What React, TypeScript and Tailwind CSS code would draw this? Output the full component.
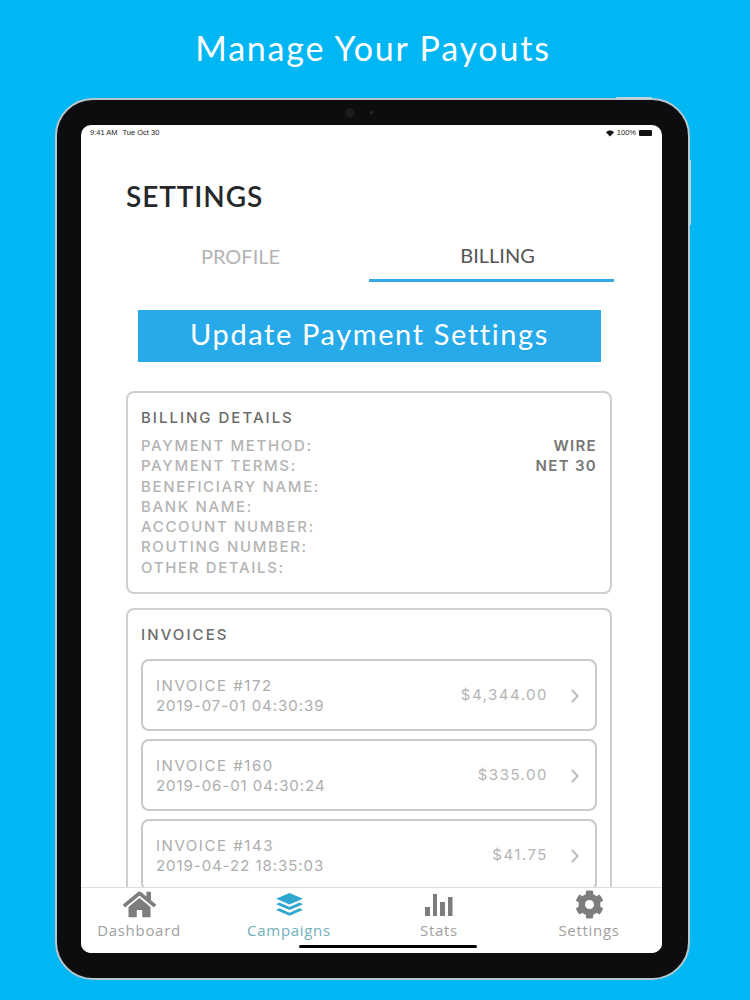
import { ChevronRight } from "lucide-react";
import { FaHome, FaCog } from "react-icons/fa";

const billingRows = [
  { label: "PAYMENT METHOD:", value: "WIRE" },
  { label: "PAYMENT TERMS:", value: "NET 30" },
  { label: "BENEFICIARY NAME:", value: "" },
  { label: "BANK NAME:", value: "" },
  { label: "ACCOUNT NUMBER:", value: "" },
  { label: "ROUTING NUMBER:", value: "" },
  { label: "OTHER DETAILS:", value: "" },
];

const invoices = [
  { id: "INVOICE #172", date: "2019-07-01 04:30:39", amount: "$4,344.00" },
  { id: "INVOICE #160", date: "2019-06-01 04:30:24", amount: "$335.00" },
  { id: "INVOICE #143", date: "2019-04-22 18:35:03", amount: "$41.75" },
];

function LayersIcon() {
  return (
    <svg width="29" height="23" viewBox="0 0 30 24" fill="#2fa8cf">
      <path d="M15 0 L29 6 L15 12 L1 6 Z" />
      <path d="M4.5 10 L15 14.5 L25.5 10 L29 11.7 L15 17.7 L1 11.7 Z" />
      <path d="M4.5 16 L15 20.5 L25.5 16 L29 17.7 L15 23.7 L1 17.7 Z" />
    </svg>
  );
}

function BarsIcon() {
  return (
    <svg width="28" height="22" viewBox="0 0 28 22" fill="#7d7d7d">
      <rect x="0" y="13" width="5" height="9" />
      <rect x="8" y="0" width="4" height="22" />
      <rect x="15" y="8" width="5" height="14" />
      <rect x="23" y="3" width="4.5" height="19" />
    </svg>
  );
}

function WifiIcon() {
  return (
    <svg width="8" height="7" viewBox="0 0 16 12" fill="#111">
      <path d="M8 12 L0 3.5 C4.5 -1 11.5 -1 16 3.5 Z" />
    </svg>
  );
}

function NavItem({ icon, label, active }: { icon: React.ReactNode; label: string; active?: boolean }) {
  return (
    <div className="flex flex-col items-center w-[150px] shrink-0">
      <div className="h-[25px] flex items-center justify-center">{icon}</div>
      <span
        className={`mt-[4px] text-[15px] leading-[18px] tracking-[0.7px] ${active ? "text-[#6fb0b8]" : "text-[#9f9f9f]"}`}
      >
        {label}
      </span>
    </div>
  );
}

export default function App() {
  return (
    <div className="w-[750px] h-[1000px] overflow-hidden bg-[#00b6f3] font-['Open_Sans',sans-serif]">
      <h1 className="h-[98px] pt-[26px] pr-[4px] text-center text-white text-[34px] leading-[44px] tracking-[1.8px] font-['Lato',sans-serif]">
        Manage Your Payouts
      </h1>

      {/* Tablet frame */}
      <div className="relative ml-[55px] w-[635px] h-[882px] rounded-[38px] bg-[#0d0c0e] border-2 border-[#b5c7cf] pt-[25px] pl-[24px] pr-[26px] pb-[25px]">
        {/* Camera dots and side buttons */}
        <div className="absolute left-[288px] top-[8px] w-[10px] h-[10px] rounded-full bg-[#1c1b1e]" />
        <div className="absolute left-[313px] top-[11px] w-[3px] h-[3px] rounded-full bg-[#2a2a2c]" />
        <div className="absolute right-[36px] top-[-3px] w-[36px] h-[2px] rounded-full bg-[#c3d2d8]" />
        <div className="absolute right-[-3px] top-[60px] w-[2px] h-[65px] rounded-full bg-[#c3d2d8]" />

        <div className="relative h-[828px] w-[581px] rounded-[10px] bg-white overflow-hidden flex flex-col">
          {/* Status bar */}
          <div className="h-[16px] pl-[9px] pr-[10px] flex items-center justify-between text-[7.5px] text-[#222] font-['Liberation_Sans',sans-serif]">
            <span className="flex gap-[5px]">
              <span>9:41 AM</span>
              <span>Tue Oct 30</span>
            </span>
            <span className="flex items-center gap-[3px]">
              <WifiIcon />
              <span>100%</span>
              <span className="w-[13px] h-[6px] rounded-[1px] bg-[#111]" />
            </span>
          </div>

          {/* Scrolling content */}
          <div className="flex-1 overflow-hidden pl-[45px] pr-[50px]">
            <h2 className="mt-[38px] text-[28px] leading-[34px] font-semibold text-[#26282b] tracking-[0.9px] font-['Lato',sans-serif]">
              SETTINGS
            </h2>

            <div className="mt-[25px] ml-[-2px] mr-[-2px] flex">
              <div className="w-[245px] h-[44px] pb-[9px] pr-[12px] flex items-center justify-center text-[20px] text-[#b3b3b3] font-['Lato',sans-serif]">
                PROFILE
              </div>
              <div className="w-[245px] h-[44px] pb-[8px] pl-[12px] flex items-center justify-center text-[20px] text-[#555] border-b-[3px] border-[#35a9e4] font-['Lato',sans-serif]">
                BILLING
              </div>
            </div>

            <div className="mt-[28px] ml-[12px] mr-[11px] h-[52px] pb-[5px] flex items-center justify-center bg-[#27aae9] text-white text-[29px] tracking-[1.6px] font-['Lato',sans-serif]">
              Update Payment Settings
            </div>

            {/* Billing details */}
            <section className="mt-[29px] h-[203px] rounded-[8px] border-2 border-[#cfcfcf] px-[13px] pt-[15px] font-['Inter',sans-serif]">
              <h3 className="text-[15px] leading-[20px] font-medium tracking-[2px] text-[#6b6b6b]">BILLING DETAILS</h3>
              <div className="mt-[8px]">
                {billingRows.map((row) => (
                  <div key={row.label} className="flex justify-between h-[20.3px] items-center text-[15px] tracking-[1.65px]">
                    <span className="text-[#b4b4b4] font-medium">{row.label}</span>
                    <span className="text-[#777] font-semibold tracking-[1.3px]">{row.value}</span>
                  </div>
                ))}
              </div>
            </section>

            {/* Invoices */}
            <section className="mt-[14px] rounded-[8px] border-2 border-[#cfcfcf] px-[13px] pt-[15px] font-['Inter',sans-serif]">
              <h3 className="text-[15px] leading-[20px] font-medium tracking-[2.1px] text-[#6b6b6b]">INVOICES</h3>
              <div className="mt-[14px] flex flex-col gap-[8px]">
                {invoices.map((inv) => (
                  <div
                    key={inv.id}
                    className="h-[72px] rounded-[8px] border-2 border-[#c9c9c9] pl-[13px] pr-[9px] pt-[1px] flex items-center justify-between"
                  >
                    <div className="text-[15px] leading-[20px] text-[#adadad]">
                      <div className="tracking-[1.55px]">{inv.id}</div>
                      <div className="tracking-[0.95px]">{inv.date}</div>
                    </div>
                    <div className="flex items-center gap-[16px]">
                      <span className="text-[15px] tracking-[1.5px] text-[#b4b4b4]">{inv.amount}</span>
                      <ChevronRight size={22} strokeWidth={2.5} className="text-[#c0c0c0]" />
                    </div>
                  </div>
                ))}
              </div>
            </section>
          </div>

          {/* Bottom nav */}
          <nav className="h-[66px] shrink-0 bg-white border-t border-[#dedede] pt-[4px] flex">
            <div className="flex ml-[-17px]">
              <NavItem icon={<FaHome size={33} color="#7d7d7d" />} label="Dashboard" />
              <NavItem icon={<LayersIcon />} label="Campaigns" active />
              <NavItem icon={<BarsIcon />} label="Stats" />
              <NavItem icon={<FaCog size={29} color="#7d7d7d" />} label="Settings" />
            </div>
          </nav>

          {/* Home indicator */}
          <div className="absolute left-[218px] bottom-[5px] w-[178px] h-[3px] rounded-full bg-black" />
        </div>
      </div>
    </div>
  );
}
